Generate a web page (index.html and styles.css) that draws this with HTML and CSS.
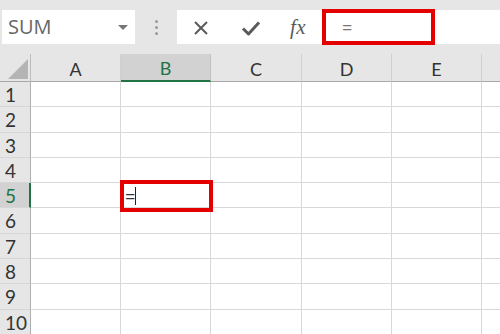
FILE: index.html
```html
<!DOCTYPE html>
<html>
<head>
<meta charset="utf-8">
<link rel="stylesheet" href="styles.css">
</head>
<body>
<div class="toolbar">
  <div class="namebox">
    <span class="name">SUM</span>
    <span class="caret"></span>
  </div>
  <div class="grip"><i></i><i></i><i></i></div>
  <div class="fbuttons">
    <svg class="ico-x" width="16" height="16" viewBox="0 0 16 16"><path d="M2 2 L14 14 M14 2 L2 14" stroke="#5a5a5a" stroke-width="2" fill="none"/></svg>
    <svg class="ico-ok" width="20" height="16" viewBox="0 0 20 16"><path d="M2 8.5 L7.5 14 L18 2.5" stroke="#5a5a5a" stroke-width="3" fill="none" stroke-linejoin="round"/></svg>
    <span class="fx">fx</span>
  </div>
  <div class="formula">
    <div class="fbox"><span class="eq">=</span></div>
  </div>
</div>
<div class="sheet">
  <div class="corner"><span class="tri"></span></div>
  <div class="ch">A</div>
  <div class="ch sel">B</div>
  <div class="ch">C</div>
  <div class="ch">D</div>
  <div class="ch">E</div>
  <div class="ch last"></div>

  <div class="rh">1</div><div class="c"></div><div class="c"></div><div class="c"></div><div class="c"></div><div class="c"></div><div class="c last"></div>
  <div class="rh">2</div><div class="c"></div><div class="c"></div><div class="c"></div><div class="c"></div><div class="c"></div><div class="c last"></div>
  <div class="rh">3</div><div class="c"></div><div class="c"></div><div class="c"></div><div class="c"></div><div class="c"></div><div class="c last"></div>
  <div class="rh">4</div><div class="c"></div><div class="c"></div><div class="c"></div><div class="c"></div><div class="c"></div><div class="c last"></div>
  <div class="rh sel">5</div><div class="c"></div><div class="c active"><div class="edit"><span class="eq2">=</span><span class="cursor"></span></div></div><div class="c"></div><div class="c"></div><div class="c"></div><div class="c last"></div>
  <div class="rh">6</div><div class="c"></div><div class="c"></div><div class="c"></div><div class="c"></div><div class="c"></div><div class="c last"></div>
  <div class="rh">7</div><div class="c"></div><div class="c"></div><div class="c"></div><div class="c"></div><div class="c"></div><div class="c last"></div>
  <div class="rh">8</div><div class="c"></div><div class="c"></div><div class="c"></div><div class="c"></div><div class="c"></div><div class="c last"></div>
  <div class="rh">9</div><div class="c"></div><div class="c"></div><div class="c"></div><div class="c"></div><div class="c"></div><div class="c last"></div>
  <div class="rh">10</div><div class="c"></div><div class="c"></div><div class="c"></div><div class="c"></div><div class="c"></div><div class="c last"></div>
</div>
</body>
</html>
```
FILE: styles.css
```css
* { box-sizing: border-box; }
html, body { margin: 0; padding: 0; }
body {
  width: 500px;
  height: 334px;
  overflow: hidden;
  background: #e6e6e6;
  font-family: Lato, "Open Sans", sans-serif;
}
.toolbar {
  height: 55px;
  display: flex;
  align-items: flex-start;
  padding-top: 10px;
  border-bottom: 1px solid #dadada;
}
.namebox {
  margin-left: 2px;
  width: 133px;
  height: 34px;
  background: #fff;
  display: flex;
  align-items: center;
  padding-left: 6px;
  padding-right: 6px;
  position: relative;
}
.name {
  font-family: "Open Sans", "Noto Sans", sans-serif;
  font-size: 20px;
  color: #666;
  flex: 1;
  margin-top: -2px;
}
.caret {
  width: 0; height: 0;
  border-left: 5px solid transparent;
  border-right: 5px solid transparent;
  border-top: 5px solid #777;
  margin-right: 1px;
  margin-top: 1px;
}
.grip {
  width: 42px;
  height: 34px;
  display: flex;
  flex-direction: column;
  align-items: center;
  justify-content: center;
  gap: 3px;
}
.grip i {
  display: block;
  width: 3px; height: 3px;
  background: #9a9a9a;
  border-radius: 50%;
}
.fbuttons {
  width: 145px;
  height: 34px;
  background: #fff;
  display: flex;
  align-items: center;
  padding-left: 16px;
}
.ico-x { margin-top: 1px; }
.ico-ok { margin-left: 32px; margin-top: 1px; }
.fx {
  margin-left: 29px;
  font-family: "Liberation Serif", serif;
  font-style: italic;
  font-size: 21px;
  color: #5a5a5a;
  letter-spacing: 0.5px;
}
.formula {
  flex: 1;
  height: 34px;
  background: #fff;
  position: relative;
}
.fbox {
  position: absolute;
  left: 0; top: -1px;
  width: 113px; height: 36px;
  border: 4px solid #e50000;
  padding-left: 16px;
  display: flex;
  align-items: center;
}
.eq {
  font-family: "Open Sans", sans-serif;
  font-size: 18px;
  color: #777;
  margin-top: -1px;
}
.sheet {
  display: grid;
  grid-template-columns: 31px 90px 90px 91px 90px 90px 1fr;
  grid-template-rows: 28px 25px 26px 25px 25px 25px 26px 25px 25px 26px 25px;
  background: #fff;
  margin-top: -1px;
}
.corner, .ch, .rh {
  background: #e6e6e6;
  border-right: 1px solid #d0d0d0;
  border-bottom: 1px solid #b8b8b8;
}
.corner { position: relative; border-bottom: 1px solid #a8a8a8; border-right: 1px solid #bdbdbd; }
.tri {
  position: absolute;
  right: 2px; bottom: 2px;
  width: 0; height: 0;
  border-left: 20px solid transparent;
  border-bottom: 20px solid #b4b4b4;
}
.ch {
  display: flex;
  align-items: center;
  justify-content: center;
  font-size: 18px;
  color: #333;
  border-bottom: 1px solid #a8a8a8;
  padding-top: 2px;
}
.ch.sel {
  background: #d2d2d2;
  color: #217346;
  border-bottom: 2px solid #217346;
  border-right-color: #c0c0c0;
}
.ch.last { border-right: none; }
.rh {
  display: flex;
  align-items: center;
  padding-left: 5px;
  font-size: 19px;
  color: #333;
  border-bottom: 1px solid #d6d6d6;
  border-right: 1px solid #b0b0b0;
}
.rh.sel {
  background: #d2d2d2;
  color: #217346;
  border-right: 2px solid #217346;
}
.c {
  border-right: 1px solid #d8d8d8;
  border-bottom: 1px solid #d8d8d8;
  position: relative;
}
.c.last { border-right: none; }
.edit {
  position: absolute;
  left: -1px; top: -3px;
  width: 93px; height: 32px;
  border: 4px solid #e50000;
  display: flex;
  align-items: center;
  padding-left: 1px;
  z-index: 2;
}
.eq2 {
  font-family: "Open Sans", sans-serif;
  font-size: 18px;
  color: #333;
  line-height: 1;
}
.cursor {
  display: block;
  width: 1px;
  height: 18px;
  background: #222;
}
```
